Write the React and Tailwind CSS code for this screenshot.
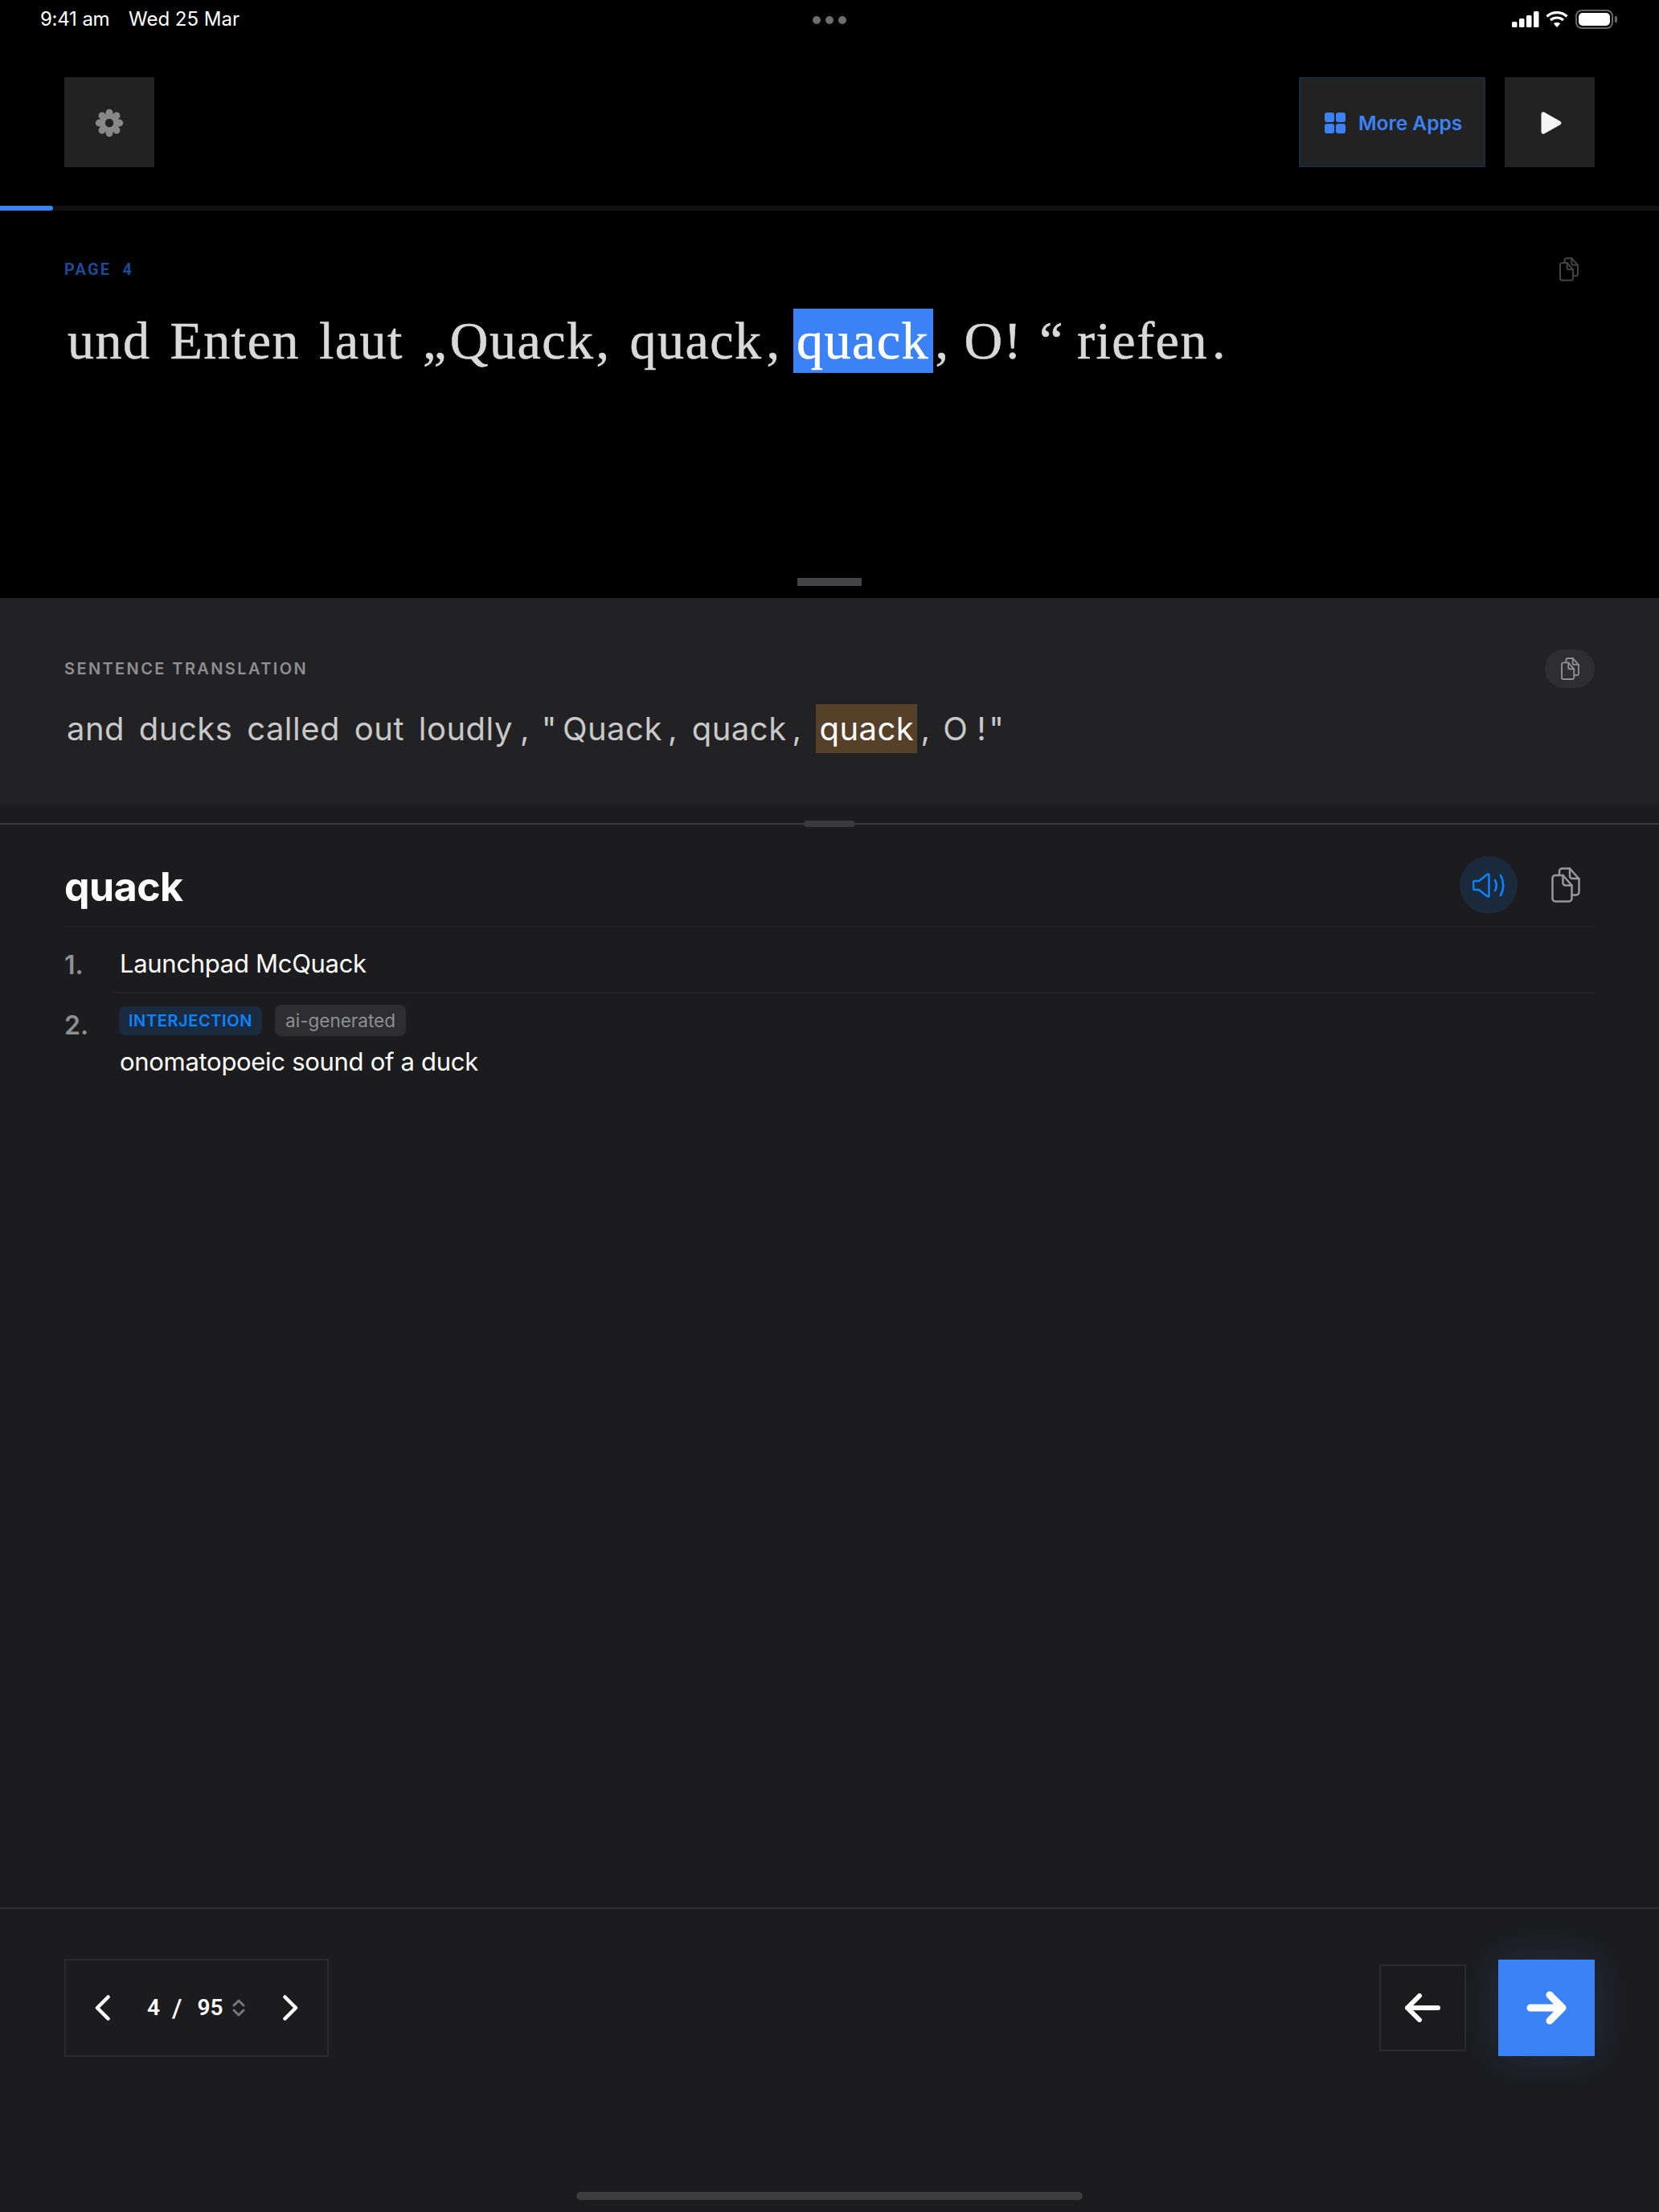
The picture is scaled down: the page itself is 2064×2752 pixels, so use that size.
import React from "react";

const Copy = ({ w, h, color, sw = 2.5 }) => (
  <svg width={w} height={h} viewBox="0 0 36 44" fill="none" stroke={color} strokeWidth={sw} strokeLinejoin="round" strokeLinecap="round">
    <path d="M5 10 H14.5 L25.5 22.5 V39 a3.5 3.5 0 0 1 -3.5 3.5 H5 a3.5 3.5 0 0 1 -3.5 -3.5 V13.5 a3.5 3.5 0 0 1 3.5 -3.5 Z" />
    <path d="M14.5 10 V19.5 a3 3 0 0 0 3 3 H25.5" />
    <path d="M10 9.5 V5 a3.5 3.5 0 0 1 3.5 -3.5 H23 L34.5 14.5 V31 a3.5 3.5 0 0 1 -3.5 3.5 H26" />
    <path d="M23 1.5 V11 a3 3 0 0 0 3 3 H34.5" />
  </svg>
);

const Gear = () => (
  <svg width="36" height="36" viewBox="0 0 36 36" fill="#888888" className="mt-px">
    <circle cx="18" cy="18" r="12.5" />
    {[0, 45, 90, 135, 180, 225, 270, 315].map((a) => (
      <circle key={a} cx={18 + 12.8 * Math.cos((a * Math.PI) / 180)} cy={18 + 12.8 * Math.sin((a * Math.PI) / 180)} r="4.4" />
    ))}
    <circle cx="18" cy="18" r="5.2" fill="#222222" />
  </svg>
);

const Chevron = ({ dir }) => (
  <svg width="20" height="32" viewBox="0 0 20 32" fill="none" stroke="#ffffff" strokeWidth="4.5" strokeLinecap="round" strokeLinejoin="round">
    {dir === "left" ? <path d="M16.5 2.5 L3 16 L16.5 29.5" /> : <path d="M3.5 2.5 L17 16 L3.5 29.5" />}
  </svg>
);

const T = ({ children, cls }) => <span className={cls}>{children}</span>;

export default function App() {
  return (
    <div className="w-[2064px] h-[2752px] flex flex-col bg-[#1c1c1e] overflow-hidden font-['Inter',sans-serif] text-white">
      <div className="bg-black">
        {/* status bar */}
        <div className="relative h-12 flex items-center justify-between pl-[50px] pr-[52px] text-[24px] leading-none text-white">
          <div className="flex">
            <span className="w-[110px] tracking-[-0.3px]">9:41<span className="ml-[7px]">am</span></span>
            <span>Wed 25 Mar</span>
          </div>
          <div className="absolute left-[1011px] top-[20px] flex gap-[6px]">
            <span className="w-[10px] h-[10px] rounded-full bg-[#6e6e6e]" />
            <span className="w-[10px] h-[10px] rounded-full bg-[#6e6e6e]" />
            <span className="w-[10px] h-[10px] rounded-full bg-[#6e6e6e]" />
          </div>
          <div className="flex items-center">
            <svg width="34" height="20" viewBox="0 0 34 20" fill="#ffffff">
              <rect x="0" y="13" width="6.5" height="7" rx="1.5" />
              <rect x="9" y="9" width="6.5" height="11" rx="1.5" />
              <rect x="18" y="5" width="6.5" height="15" rx="1.5" />
              <rect x="27" y="0" width="6.5" height="20" rx="1.5" />
            </svg>
            <svg className="ml-[8px]" width="28" height="20" viewBox="0 0 28 20" fill="none" stroke="#ffffff" strokeWidth="3.2">
              <path d="M1.5 6.5 C8.5 0 19.5 0 26.5 6.5" />
              <path d="M6 11 C10.5 7 17.5 7 22 11" />
              <path d="M14 20 L9.8 15.3 C12 13.4 16 13.4 18.2 15.3 Z" fill="#ffffff" stroke="none" />
            </svg>
            <div className="ml-[9px] w-[47px] h-[24px] rounded-[8px] border-2 border-[#666666] p-[2px]">
              <div className="w-full h-full rounded-[5px] bg-white" />
            </div>
            <div className="ml-[2px] w-[3px] h-[8px] rounded-r-[2px] bg-[#666666]" />
          </div>
        </div>

        {/* toolbar */}
        <div className="flex items-center justify-between px-20 pt-12 pb-12">
          <button className="w-28 h-28 bg-[#222222] flex items-center justify-center"><Gear /></button>
          <div className="flex gap-6">
            <button className="w-[232px] h-28 bg-[#222222] border-2 border-[#1c2a3f] flex items-center pl-[30px] gap-[16px]">
              <span className="grid grid-cols-2 gap-[2px] w-[26px] mt-px">
                <span className="w-3 h-3 rounded-[3px] bg-[#3b82f6]" />
                <span className="w-3 h-3 rounded-[3px] bg-[#3b82f6]" />
                <span className="w-3 h-3 rounded-[3px] bg-[#3b82f6]" />
                <span className="w-3 h-3 rounded-[3px] bg-[#3b82f6]" />
              </span>
              <span className="text-[24.5px] font-semibold text-[#3b82f6] leading-none mt-[2px]">More Apps</span>
            </button>
            <button className="w-28 h-28 bg-[#222222] flex items-center justify-center">
              <svg width="26" height="28" viewBox="0 0 26 28" fill="#f5f5f5" className="ml-1 mt-px">
                <path d="M0.5 3 C0.5 0.8 2.6 -0.4 4.5 0.7 L24 11.8 C25.8 12.9 25.8 15.1 24 16.2 L4.5 27.3 C2.6 28.4 0.5 27.2 0.5 25 Z" />
              </svg>
            </button>
          </div>
        </div>

        {/* progress */}
        <div className="h-1.5 bg-[#111111]">
          <div className="w-[66px] h-full bg-[#3b82f6] rounded-r-full" />
        </div>
      </div>

      {/* original sentence */}
      <section className="h-[482px] bg-black pt-[61px] flex flex-col">
        <div className="flex items-start justify-between pl-20 pr-[100px] h-[24px]">
          <span className="font-['Roboto',sans-serif] text-[20px] leading-6 font-bold tracking-[2.2px] text-[#1e4a94]">PAGE <span className="ml-[7px]">4</span></span>
          <span className="-mt-[3px]"><Copy w={24} h={30} color="#444444" sw={3} /></span>
        </div>
        <p className="mt-[37px] pl-[84px] h-[80px] font-['Liberation_Serif',serif] text-[66px] leading-[80px] tracking-[1.5px] [word-spacing:6px] [-webkit-text-stroke:0.6px] text-[#d9d9d9] whitespace-nowrap">
          und Enten laut „<T cls="ml-[3px]">Quack</T><T cls="ml-[2px]">,</T> quack<T cls="ml-[5px]">,</T> <span className="inline-block -ml-[9px] h-[80px] w-[174px] text-center bg-[#3b82f6] text-white">quack</span><T cls="ml-[3px]">,</T> <T cls="-ml-[6px]">O!</T> <T cls="-ml-[3px]">“</T> <T cls="-ml-[8px]">riefen</T><T cls="ml-[5px]">.</T>
        </p>
        <div className="mt-auto mb-[15px] mx-auto w-20 h-2.5 bg-[#444446]" />
      </section>

      {/* translation */}
      <section className="h-[257px] bg-[#222224] pt-16 pl-20 pr-20">
        <div className="flex items-center justify-between h-12">
          <span className="text-[20px] font-semibold leading-none tracking-[2.4px] text-[#8e8e93]">SENTENCE TRANSLATION</span>
          <span className="w-[62px] h-12 rounded-full bg-[#2e2e30] flex items-center justify-center"><Copy w={23} h={28} color="#8e8e93" sw={3} /></span>
        </div>
        <p className="mt-5 pl-[3px] text-[40px] leading-[61px] tracking-[0.5px] [word-spacing:6px] text-[#c8c8c8] whitespace-nowrap">
          and ducks called out loudly<T cls="ml-[9px]">,</T> <T cls="-ml-[3px]">"</T><T cls="ml-[7px]">Quack</T><T cls="ml-[7px]">,</T> quack<T cls="ml-[7px]">,</T> <span className="inline-block h-[61px] w-[126px] text-center bg-[#574029] text-white">quack</span><T cls="ml-[4px]">,</T> <T cls="-ml-[2px]">O</T><T cls="ml-[11px]">!</T><T cls="ml-[3px]">"</T>
        </p>
      </section>

      {/* divider band */}
      <div className="relative h-[25px] border-b-2 border-[#3a3a3c] bg-[#1c1c1e]">
        <div className="absolute left-[1000px] top-[20px] w-16 h-2 rounded-full bg-[#3a3a3c]" />
      </div>

      {/* dictionary */}
      <section className="flex-1 px-20">
        <div className="h-[127px] pt-6 border-b border-[#262628] flex items-center justify-between">
          <h2 className="text-[50px] font-bold leading-none tracking-[-0.5px] mt-1">quack</h2>
          <div className="flex items-center mr-[18px]">
            <span className="w-[72px] h-[72px] rounded-full bg-[#1a2a3c] flex items-center justify-center">
              <svg width="41" height="31" viewBox="0 0 41 31" fill="none" stroke="#0a84ff" strokeWidth="2.6" strokeLinecap="round" strokeLinejoin="round">
                <path d="M3 10 H8 L18.5 1.8 Q20.5 0.8 20.5 3 V28 Q20.5 30.2 18.5 29.2 L8 21 H3 Q1 21 1 19 V12 Q1 10 3 10 Z" />
                <path d="M28 9 Q31.5 15.5 28 22" />
                <path d="M35 3 Q41.5 15.5 35 28" />
              </svg>
            </span>
            <span className="ml-[42px]"><Copy w={36} h={44} color="#98989d" /></span>
          </div>
        </div>

        <div className="flex">
          <span className="w-[60px] pt-[28px] text-[32px] leading-10 font-semibold text-[#8e8e93]">1.</span>
          <div className="flex-1 pl-[9px] pt-[26px] pb-[15px] border-b border-[#262628] text-[31px] leading-10 tracking-[-0.3px]">Launchpad McQuack</div>
        </div>
        <div className="flex">
          <span className="w-[60px] pt-[21px] text-[32px] leading-10 font-semibold text-[#8e8e93]">2.</span>
          <div className="flex-1 pl-2 pt-[15px]">
            <div className="flex items-center gap-4 h-[39px]">
              <span className="h-9 w-[178px] justify-center rounded-[8px] bg-[#1a2a3f] text-[20px] font-semibold tracking-[0.6px] text-[#0a84ff] flex items-center">INTERJECTION</span>
              <span className="h-[39px] w-[163px] justify-center rounded-[8px] bg-[#2e2e32] text-[22.5px] text-[#8e8e93] flex items-center">ai-generated</span>
            </div>
            <p className="mt-3 pl-[1px] text-[31px] leading-10 tracking-[-0.3px]">onomatopoeic sound of a duck</p>
          </div>
        </div>
      </section>

      {/* footer */}
      <footer className="h-[379px] border-t-2 border-[#2e2e30] pt-[62px] px-20 flex flex-col">
        <div className="flex items-center justify-between">
          <div className="w-[329px] h-[122px] border-2 border-[#2c2c2e] flex items-center pl-9 text-[28px] font-['Roboto',sans-serif] font-semibold">
            <Chevron dir="left" />
            <span className="ml-[45px] w-[16px]">4</span>
            <span className="ml-[15px] font-medium text-[32px] leading-none">/</span>
            <span className="ml-[19px]">95</span>
            <svg className="ml-[12px]" width="16" height="22" viewBox="0 0 16 22" fill="none" stroke="#777777" strokeWidth="3" strokeLinecap="round" strokeLinejoin="round">
              <path d="M2 8 L8 2 L14 8" />
              <path d="M2 14 L8 20 L14 14" />
            </svg>
            <span className="ml-[46px]"><Chevron dir="right" /></span>
          </div>
          <div className="flex items-center gap-10">
            <button className="w-[108px] h-[108px] border-2 border-[#2c2c2e] flex items-center justify-center">
              <svg width="44" height="36" viewBox="0 0 44 36" fill="none" stroke="#ffffff" strokeWidth="6" strokeLinecap="round" strokeLinejoin="round">
                <path d="M41 18 H3 M18 3 L3 18 L18 33" />
              </svg>
            </button>
            <button className="w-[120px] h-[120px] bg-[#3b82f6] shadow-[0_0_50px_rgba(59,130,246,0.2)] flex items-center justify-center">
              <svg width="50" height="42" viewBox="0 0 50 42" fill="none" stroke="#ffffff" strokeWidth="9" strokeLinecap="round" strokeLinejoin="round">
                <path d="M5 21 H45 M29 5 L45 21 L29 37" />
              </svg>
            </button>
          </div>
        </div>
        <div className="mt-auto mb-[15px] mx-auto w-[630px] h-2.5 rounded-full bg-[#3d3d3d]" />
      </footer>
    </div>
  );
}
